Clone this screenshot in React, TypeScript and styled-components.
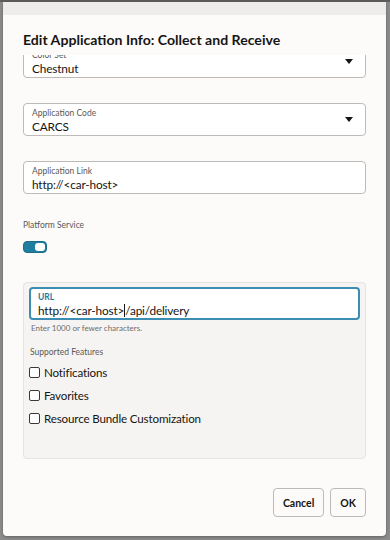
import React from 'react';
import styled, { createGlobalStyle } from 'styled-components';

const GlobalStyle = createGlobalStyle`
  html, body {
    margin: 0;
    padding: 0;
    background: #8b8b8b;
  }
  body {
    font-family: Lato, "Noto Sans", sans-serif;
    color: #161513;
  }
  * { box-sizing: border-box; }
`;

const Page = styled.div`
  width: 390px;
  height: 540px;
  padding: 2px 4px 4px 3px;
  background: linear-gradient(#5d5d5d 0 2px, #8b8b8b 2px);
`;

const Dialog = styled.div`
  height: 100%;
  background: #fcfbfa;
  border-radius: 0 0 4px 4px;
  display: flex;
  flex-direction: column;
  overflow: hidden;
  box-shadow: 0 1px 3px rgba(0, 0, 0, 0.3);
`;

const TopStrip = styled.div`
  height: 13px;
  flex: none;
  background: #eeecea;
`;

const Header = styled.div`
  padding: 15px 20px 5px;
  flex: none;
`;

const Title = styled.h1`
  margin: 0;
  font-size: 14.1px;
  line-height: 20px;
  font-weight: 700;
`;

// content area is scrolled a little, so the first field sits under the header
const Body = styled.div`
  flex: 1;
  overflow: hidden;
  padding: 0 20px;
`;

const Form = styled.div`
  display: flex;
  flex-direction: column;
  margin-top: -10px;
  padding-bottom: 20px;
`;

const Field = styled.div<{ $focused?: boolean }>`
  height: 33px;
  flex: none;
  background: #fff;
  border: ${p => (p.$focused ? '2px solid #3d8db3' : '1px solid #bdbab7')};
  border-radius: 4px;
  padding: ${p => (p.$focused ? '3px 7px 0' : '4px 8px 0')};
  display: flex;
  align-items: center;
  justify-content: space-between;
  margin-bottom: 25px;
`;

const FieldText = styled.div`
  display: flex;
  flex-direction: column;
  min-width: 0;
`;

const FieldLabel = styled.span<{ $accent?: boolean }>`
  font-size: 8.5px;
  line-height: 11px;
  color: ${p => (p.$accent ? '#1f7a9c' : '#5b5855')};
  font-weight: ${p => (p.$accent ? 700 : 400)};
`;

const FieldValue = styled.span`
  font-size: 11.8px;
  line-height: 16px;
  letter-spacing: -0.15px;
  color: #161513;
  white-space: nowrap;
`;

const Caret = styled.span`
  width: 0;
  height: 0;
  border-left: 4.5px solid transparent;
  border-right: 4.5px solid transparent;
  border-top: 5px solid #161513;
  margin-right: 4px;
  margin-top: -4px;
`;

const Cursor = styled.span`
  display: inline-block;
  width: 1px;
  height: 13px;
  background: #161513;
  vertical-align: -2px;
`;

const SectionLabel = styled.div`
  font-size: 8.5px;
  line-height: 12px;
  color: #5b5855;
  margin: 0 0 10px;
`;

const Toggle = styled.div`
  width: 24px;
  height: 12px;
  border-radius: 4px;
  background: #227e9e;
  border: 1px solid #1b6d8a;
  display: flex;
  justify-content: flex-end;
  align-items: center;
  padding: 1px;
  margin-bottom: 29px;
`;

const Knob = styled.div`
  width: 10px;
  height: 8px;
  border-radius: 3px;
  background: #fff;
`;

const Panel = styled.div`
  background: #f5f4f2;
  border: 1px solid #e6e3e0;
  border-radius: 4px;
  padding: 4px 5px 0;
  height: 177px;
`;

const Help = styled.div`
  font-size: 8px;
  line-height: 10px;
  color: #6f6c69;
  margin: -22px 0 0 2px;
`;

const FeaturesLabel = styled(SectionLabel)`
  margin: 13px 0 3px 1px;
`;

const CheckRow = styled.label`
  display: flex;
  align-items: center;
  gap: 4px;
  height: 23px;
  font-size: 11.6px;
  letter-spacing: -0.15px;
  color: #161513;
`;

const Box = styled.span`
  width: 11px;
  height: 11px;
  border: 1px solid #3b3835;
  border-radius: 2px;
  background: #fff;
`;

const Footer = styled.div`
  flex: none;
  display: flex;
  justify-content: flex-end;
  gap: 6px;
  padding: 0 20px 19px;
`;

const Button = styled.button`
  height: 29px;
  padding: 0 9px;
  border: 1px solid #bdbab7;
  border-radius: 4px;
  background: #fcfbfa;
  font-family: inherit;
  font-size: 10.5px;
  font-weight: 700;
  color: #161513;
`;

const features = ['Notifications', 'Favorites', 'Resource Bundle Customization'];

export default function App() {
  return (
    <>
      <GlobalStyle />
      <Page>
        <Dialog>
          <TopStrip />
          <Header>
            <Title>Edit Application Info: Collect and Receive</Title>
          </Header>
          <Body>
            <Form>
              <Field>
                <FieldText>
                  <FieldLabel>Color Set</FieldLabel>
                  <FieldValue>Chestnut</FieldValue>
                </FieldText>
                <Caret />
              </Field>
              <Field>
                <FieldText>
                  <FieldLabel>Application Code</FieldLabel>
                  <FieldValue>CARCS</FieldValue>
                </FieldText>
                <Caret />
              </Field>
              <Field>
                <FieldText>
                  <FieldLabel>Application Link</FieldLabel>
                  <FieldValue>http://&lt;car-host&gt;</FieldValue>
                </FieldText>
              </Field>
              <SectionLabel>Platform Service</SectionLabel>
              <Toggle>
                <Knob />
              </Toggle>
              <Panel>
                <Field $focused>
                  <FieldText>
                    <FieldLabel $accent>URL</FieldLabel>
                    <FieldValue>
                      http://&lt;car-host&gt;<Cursor />/api/delivery
                    </FieldValue>
                  </FieldText>
                </Field>
                <Help>Enter 1000 or fewer characters.</Help>
                <FeaturesLabel>Supported Features</FeaturesLabel>
                {features.map(f => (
                  <CheckRow key={f}>
                    <Box />
                    {f}
                  </CheckRow>
                ))}
              </Panel>
            </Form>
          </Body>
          <Footer>
            <Button>Cancel</Button>
            <Button>OK</Button>
          </Footer>
        </Dialog>
      </Page>
    </>
  );
}
